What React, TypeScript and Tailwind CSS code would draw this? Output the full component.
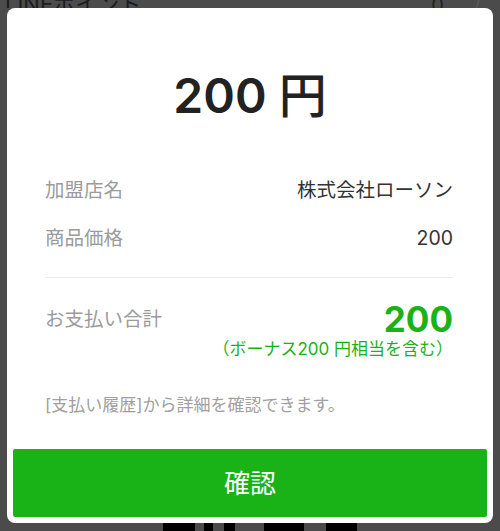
import React from "react";

const green = "#19b318";

const jp = "font-['Inter','Noto_Sans_CJK_JP',sans-serif]";

function Row({ label, value }: { label: string; value: string }) {
  return (
    <div className="flex h-[48px] items-center justify-between pt-[3px]">
      <span className="text-[19.5px] text-[#9b9b9b]">{label}</span>
      <span className="text-[19.5px] text-[#333]">{value}</span>
    </div>
  );
}

export default function App() {
  const bars = [
    { left: 163, w: 32 },
    { left: 204, w: 9 },
    { left: 224, w: 11 },
    { left: 264, w: 40 },
    { left: 326, w: 31 },
  ];

  return (
    <div className={`flex h-[531px] w-[500px] flex-col overflow-hidden bg-[#4b4b4b] ${jp}`}>
      {/* page behind the dialog */}
      <div className="flex h-[8px] items-end justify-between overflow-hidden px-[5px]">
        <span className="mb-[-7px] text-[22px] leading-[22px] text-[#1c1c1c]">LINEポイント</span>
        <div className="mb-[-7px] mr-[14px] flex items-end gap-[30px] text-[20px] leading-[20px] text-[#222]">
          <span>0</span>
          <span className="text-[#5a5a5a]">/</span>
        </div>
      </div>

      {/* dialog */}
      <div className="mx-[7px] flex h-[515px] flex-col rounded-[8px] bg-white">
        <div className="pt-[64px] text-center text-[48px] font-semibold leading-[48px] text-[#222]">
          200 <span className="font-medium">円</span>
        </div>

        <div className="mt-[45px] pl-[38px] pr-[40px]">
          <Row label="加盟店名" value="株式会社ローソン" />
          <Row label="商品価格" value="200" />

          <div className="mt-[16px] h-px bg-[#ececec]" />

          <div className="mt-[24px] flex items-start justify-between">
            <span className="text-[19.5px] leading-[34px] text-[#9b9b9b]">お支払い合計</span>
            <div className="flex flex-col items-end">
              <span className="text-[35px] font-bold leading-[34px]" style={{ color: green }}>
                200
              </span>
              <span className="mt-[2px] text-[17px] leading-[22px]" style={{ color: green }}>
                （ボーナス200 円相当を含む）
              </span>
            </div>
          </div>

          <div className="mt-[33px] text-[17px] leading-[24px] text-[#a0a0a0]">
            [支払い履歴]から詳細を確認できます。
          </div>
        </div>

        <button className="mx-[6px] mb-[6px] mt-auto flex h-[68px] items-center justify-center rounded-[2px] bg-[#19b318] text-[26px] text-white">
          確認
        </button>
      </div>

      {/* bottom strip behind the dialog */}
      <div className="flex h-[8px]">
        {bars.map((b, i) => (
          <div
            key={i}
            className="h-full bg-black"
            style={{ marginLeft: i === 0 ? b.left : b.left - (bars[i - 1].left + bars[i - 1].w), width: b.w }}
          />
        ))}
      </div>
    </div>
  );
}
